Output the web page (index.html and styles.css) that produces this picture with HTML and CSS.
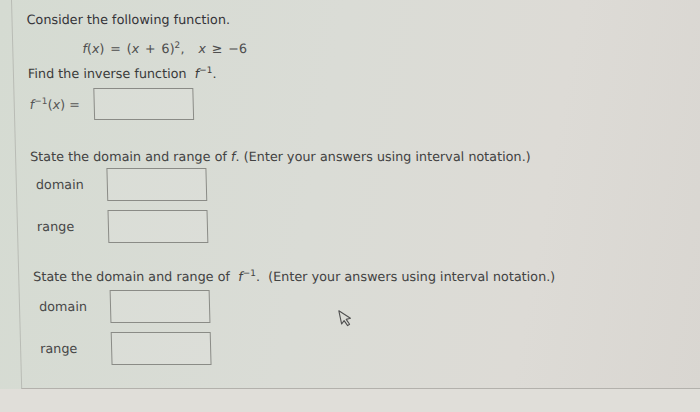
FILE: index.html
```html
<!DOCTYPE html>
<html>
<head>
<meta charset="utf-8">
<link rel="stylesheet" href="styles.css">
</head>
<body>
<div class="panel">
  <p class="line first">Consider the following function.</p>
  <p class="line formula"><i>f</i>(<i>x</i>) = (<i>x</i> + 6)<sup>2</sup>,<span class="gap"></span><i>x</i> ≥ −6</p>
  <p class="line">Find the inverse function&nbsp; <i>f</i><sup>−1</sup>.</p>
  <div class="row inv">
    <span class="math-label"><i>f</i><sup>−1</sup>(<i>x</i>) =</span>
    <span class="box"></span>
  </div>
  <p class="line section">State the domain and range of <i>f</i>. (Enter your answers using interval notation.)</p>
  <div class="row field first-field"><span class="label">domain</span><span class="box"></span></div>
  <div class="row field"><span class="label">range</span><span class="box"></span></div>
  <p class="line section">State the domain and range of&nbsp; <i>f</i><sup>−1</sup>.&nbsp; (Enter your answers using interval notation.)</p>
  <div class="row field first-field b"><span class="label">domain</span><span class="box"></span></div>
  <div class="row field"><span class="label">range</span><span class="box"></span></div>
</div>
<svg class="cursor" width="14" height="20" viewBox="0 0 14 20">
  <path d="M1.5 1.5 L1.5 15 L4.6 12.2 L7 17.8 L9.2 16.8 L6.9 11.4 L11.3 11.2 Z" fill="none" stroke="#505050" stroke-width="1.1" stroke-linejoin="round"/>
</svg>
</body>
</html>
```
FILE: styles.css
```css
html, body {
  margin: 0;
  padding: 0;
}
body {
  width: 700px;
  height: 412px;
  overflow: hidden;
  position: relative;
  background:
    linear-gradient(#e0ded9, #e0ded9) left bottom / 100% 23px no-repeat,
    linear-gradient(100deg, #d5dbd2 0%, #dadcd6 45%, #dddbd6 75%, #d9d6d1 100%);
  font-family: "DejaVu Sans", Verdana, sans-serif;
  font-size: 12.8px;
  color: #444;
}
.panel {
  margin-left: 11px;
  width: 664px;
  height: 378px;
  padding: 10px 0 0 14px;
  border-left: 1px solid #b9bcb5;
  border-bottom: 1px solid #b3b1ac;
  transform: skewX(1.5deg);
  transform-origin: 0 0;
  display: flex;
  flex-direction: column;
  align-items: flex-start;
}
.line {
  margin: 0;
  line-height: 20px;
  white-space: nowrap;
}
.first {
  color: #343338;
}
.formula {
  margin-top: 9px;
  margin-left: 55px;
  color: #4e4e4e;
  word-spacing: 1.7px;
}
.gap {
  display: inline-block;
  width: 14px;
}
.formula + .line {
  margin-top: 5px;
  color: #3a3a3a;
}
sup {
  font-size: 9px;
  line-height: 0;
  vertical-align: 5px;
}
i {
  font-style: italic;
}
.row {
  display: flex;
  align-items: center;
}
.inv {
  margin-top: 4px;
  padding-left: 1px;
}
.math-label {
  width: 64px;
  color: #555;
}
.box {
  display: block;
  width: 100px;
  height: 32px;
  box-sizing: border-box;
  border: 1px solid #8a8b86;
  background: rgba(255, 255, 255, 0.08);
}
.section {
  margin-top: 27px;
  color: #424242;
}
.section + .field {
  margin-top: 1px;
}
.field {
  margin-top: 9px;
  padding-left: 5px;
}
.field .box {
  height: 33px;
}
.first-field.b {
  margin-top: 3px;
}
.label {
  width: 71px;
  color: #474747;
}
.section ~ .section {
  margin-top: 24px;
}
.cursor {
  position: absolute;
  left: 339px;
  top: 308px;
  transform: rotate(-12deg);
}
```
